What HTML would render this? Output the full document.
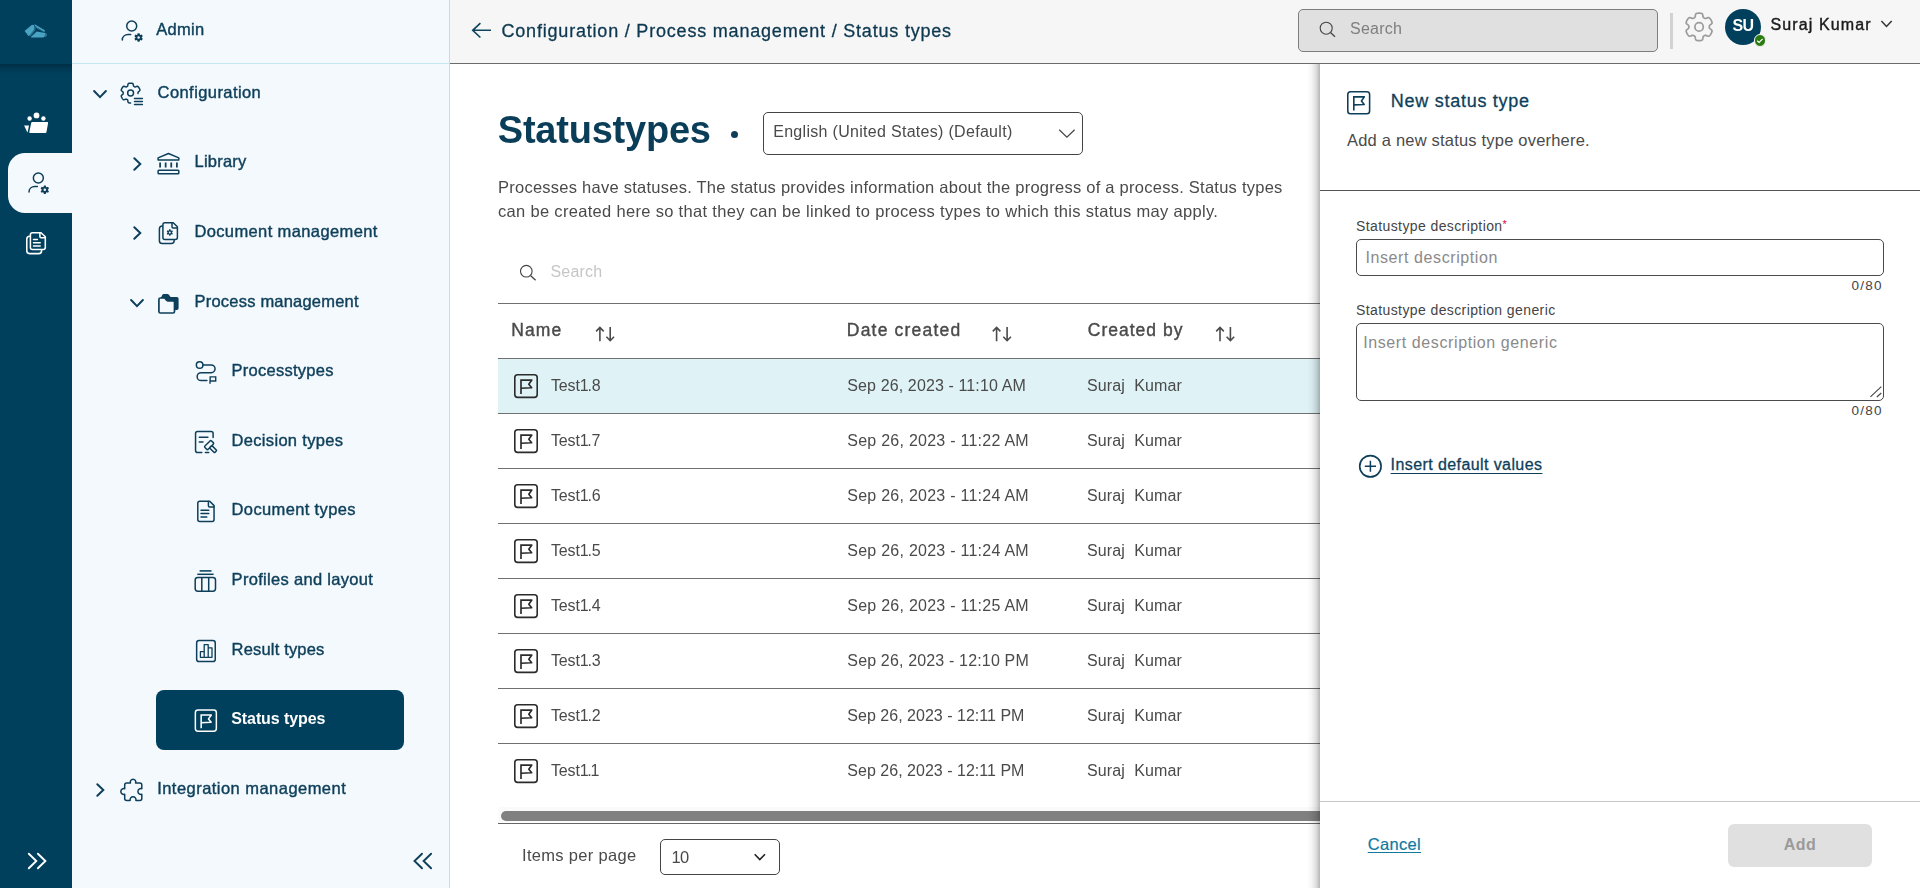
<!DOCTYPE html>
<html lang="en">
<head>
<meta charset="utf-8">
<title>Status types</title>
<style>
*{box-sizing:border-box;margin:0;padding:0}
html,body{width:1920px;height:888px;overflow:hidden;background:#fff;font-family:"Liberation Sans",sans-serif;color:#0e3f5a}
.abs{position:absolute}
svg{display:block;overflow:visible;position:absolute;left:0;top:0}
.t{position:absolute;white-space:nowrap;line-height:20px}
.med{-webkit-text-stroke:.35px currentColor}
.ic{fill:none;stroke:#0e3f5a;stroke-width:1.5;stroke-linecap:round;stroke-linejoin:round}

#rail{position:absolute;left:0;top:0;width:72px;height:888px;background:#00405c}
#railshadow{position:absolute;left:0;top:64px;width:72px;height:10px;background:linear-gradient(rgba(0,30,48,.5),rgba(0,30,48,.18) 55%,rgba(0,30,48,0))}
#railactive{position:absolute;left:8px;top:153px;width:64px;height:60px;background:#f4f9fd;border-radius:17px 0 0 17px}

#side{position:absolute;left:72px;top:0;width:378px;height:888px;background:#f4f9fd;border-right:1px solid #d3d7da}
#sidehead{position:absolute;left:72px;top:63px;width:377px;height:1px;background:#c4e6ee}
.nav{font-size:16.5px;letter-spacing:.5px;color:#0e3f5a;-webkit-text-stroke:.42px #0e3f5a}
#active{position:absolute;left:156px;top:690px;width:248px;height:60px;background:#00405c;border-radius:8px}

#top{position:absolute;left:450px;top:0;width:1470px;height:64px;background:#f6f6f6;border-bottom:1px solid #6c6c6c}
#gsearch{position:absolute;left:1298px;top:9px;width:360px;height:43px;background:#e0e0e0;border:1px solid #7e7e7e;border-radius:5px}

.row{position:absolute;left:498px;width:830px;height:55px;border-top:1px solid #707070}
.row.sel{background:#dff3f7}
.cell{font-size:16px;color:#4a4a4a;letter-spacing:.14px}
.nm{letter-spacing:-.15px}
.th{font-size:17.5px;color:#4a4a4a;letter-spacing:1px;-webkit-text-stroke:.4px #4a4a4a}

#panel{position:absolute;left:1320px;top:64px;width:600px;height:824px;background:#fff}
#pshadow{position:absolute;left:1307px;top:64px;width:13px;height:824px;background:linear-gradient(to right,rgba(0,0,0,0),rgba(0,0,0,.04) 35%,rgba(0,0,0,.13) 70%,rgba(0,0,0,.29))}
.lbl{font-size:14px;color:#444;letter-spacing:.4px}
.ph{font-size:16px;color:#8a8a8a;letter-spacing:.6px}
.cnt{font-size:13.5px;color:#444;letter-spacing:1.25px;right:37.3px}
.inp{position:absolute;left:1356px;width:528px;border:1.3px solid #4a4a4a;border-radius:5px;background:#fff}
</style>
</head>
<body>

<div id="g" style="position:absolute;left:0;top:0;width:1920px;height:888px;will-change:transform">
<!-- ============ RAIL ============ -->
<div id="rail"></div>
<div id="railshadow"></div>
<div id="railactive"></div>
<svg width="72" height="888" viewBox="0 0 72 888">
  <!-- logo -->
  <g fill="#4ba3c3">
    <path d="M24.6,31 L31.7,25.1 Q32.4,24.6 33.2,24.9 L34.3,25.4 L34.2,29.8 L29.3,35.8 Q28.8,36.2 28.3,35.7 Z"/>
    <path d="M34.2,24.1 L44.9,30.2 L44.6,31.9 L36.2,27.2 L34.9,25.4 Z"/>
    <path d="M30.9,36.9 L36.6,31.6 L45.3,33.1 L46.9,34.3 L46.5,35.9 L43,37.5 L31.2,37.5 Z"/>
  </g>
  <path d="M34.3,25.4 L35.6,27.6 L35.3,30.2 L30.4,36.4 L29.3,35.8 L34.2,29.8 Z" fill="#2e7491"/>
  <path d="M45.3,33.1 L46.9,34.3 L46.5,35.9 L44.2,36.9 L44.6,35.2 Z" fill="#2e6f8b"/>
  <path d="M36.2,27.2 L44.6,31.9 L44.4,32.6 L36.9,28.6 Z" fill="#2e7491"/>
  <!-- team/folder -->
  <g fill="#fff">
    <circle cx="36.5" cy="115.4" r="2.9"/><circle cx="29.6" cy="118.5" r="2.2"/><circle cx="43.4" cy="118.5" r="2.2"/>
    <path d="M32.3,122.1 H47.3 Q48.3,122.1 48.1,123.1 L46.5,132 Q46.3,133 45.3,133 H30.2 Q29.1,133 29.3,132 L31.2,123 Q31.4,122.1 32.3,122.1Z"/>
    <path d="M24.1,125.6 H29 L27.7,131.9 Q27.5,132.4 27.2,131.9 Z"/>
  </g>
  <!-- admin (active) -->
  <g class="ic" stroke-width="1.5">
    <circle cx="38.35" cy="178.05" r="5"/>
    <path d="M29,192 C29,188.6 31.6,186.6 34.8,186.6 H37.4"/>
  </g>
  <path d="M45.71,185.50L43.89,185.50L43.51,186.91L42.94,187.24L41.53,186.86L40.62,188.44L41.65,189.47L41.65,190.13L40.62,191.16L41.53,192.74L42.94,192.36L43.51,192.69L43.89,194.10L45.71,194.10L46.09,192.69L46.66,192.36L48.07,192.74L48.98,191.16L47.95,190.13L47.95,189.47L48.98,188.44L48.07,186.86L46.66,187.24L46.09,186.91ZM43.55,189.80 a1.25,1.25 0 1 0 2.50,0 a1.25,1.25 0 1 0 -2.50,0Z" fill="#0e3f5a" fill-rule="evenodd"/>
  <!-- docs -->
  <g fill="none" stroke="#fff" stroke-width="1.55" stroke-linecap="round" stroke-linejoin="round">
    <path d="M32.4,232.7 H41 L45.3,236.8 V247.4 Q45.3,249.4 43.3,249.4 H32.4 Q30.4,249.4 30.4,247.4 V234.7 Q30.4,232.7 32.4,232.7Z"/>
    <path d="M39.9,232.9 V236.6 Q39.9,237.7 41,237.7 H45.1"/>
    <path d="M33.5,239.4H37.4M33.5,242.7H40.2M33.5,245.9H40.2"/>
    <path d="M29.8,236.2 Q26.8,236.2 26.8,239.2 V250.8 Q26.8,253.6 29.6,253.6 H38.8 Q41.5,253.6 41.6,250.6"/>
  </g>
  <!-- expand -->
  <path d="M28.8,853.7 L36.3,861 L28.8,868.3 M37.9,853.7 L45.4,861 L37.9,868.3" fill="none" stroke="#fff" stroke-width="1.9" stroke-linecap="round" stroke-linejoin="miter"/>
</svg>

<!-- ============ SIDEBAR ============ -->
<div id="side"></div>
<div id="sidehead"></div>
<div id="active"></div>
<svg width="450" height="888" viewBox="0 0 450 888">
  <!-- Admin icon -->
  <g class="ic"><circle cx="131.7" cy="26" r="5"/><path d="M122.3,40 C122.3,36.6 124.9,34.55 128.1,34.55 H130.7"/></g>
  <path d="M139.51,33.20L137.69,33.20L137.31,34.61L136.74,34.94L135.33,34.56L134.42,36.14L135.45,37.17L135.45,37.83L134.42,38.86L135.33,40.44L136.74,40.06L137.31,40.39L137.69,41.80L139.51,41.80L139.89,40.39L140.46,40.06L141.87,40.44L142.78,38.86L141.75,37.83L141.75,37.17L142.78,36.14L141.87,34.56L140.46,34.94L139.89,34.61ZM137.35,37.50 a1.25,1.25 0 1 0 2.50,0 a1.25,1.25 0 1 0 -2.50,0Z" fill="#0e3f5a" fill-rule="evenodd"/>

  <!-- chevrons -->
  <g fill="none" stroke="#0e3f5a" stroke-width="2" stroke-linecap="round" stroke-linejoin="miter">
    <path d="M94.1,91 L100,97.1 L105.9,91"/>
    <path d="M134.3,158.2 L140.3,164 L134.3,169.8"/>
    <path d="M134.3,227.2 L140.3,233 L134.3,238.8"/>
    <path d="M131.1,300 L137,306.1 L142.9,300"/>
    <path d="M97.3,784.2 L103.3,790 L97.3,795.8"/>
    <path d="M422,853.7 L414.5,861 L422,868.3 M431.1,853.7 L423.6,861 L431.1,868.3" stroke-width="1.9"/>
  </g>

  <!-- Configuration gear -->
  <g class="ic" stroke-width="1.5">
    <path d="M138.01,93.44L138.00,93.05L138.01,92.66L138.09,92.26L138.40,91.81L139.15,91.23L139.82,90.58L139.94,90.02L139.83,89.51L139.64,89.02L139.42,88.56L139.17,88.10L138.90,87.66L138.61,87.23L138.28,86.83L137.90,86.48L137.35,86.30L136.45,86.55L135.57,86.91L135.03,86.96L134.64,86.82L134.30,86.64L133.97,86.44L133.66,86.17L133.43,85.68L133.30,84.73L133.07,83.83L132.64,83.44L132.15,83.29L131.63,83.21L131.12,83.16L130.60,83.15L130.08,83.16L129.57,83.21L129.05,83.29L128.56,83.44L128.13,83.83L127.90,84.73L127.77,85.68L127.54,86.17L127.23,86.44L126.90,86.64L126.56,86.82L126.17,86.96L125.63,86.91L124.75,86.55L123.85,86.30L123.30,86.48L122.92,86.83L122.59,87.23L122.30,87.66L122.03,88.10L121.78,88.56L121.56,89.02L121.37,89.51L121.26,90.02L121.38,90.58L122.05,91.23L122.80,91.81L123.11,92.26L123.19,92.66L123.20,93.05L123.19,93.44L123.11,93.84L122.80,94.29L122.05,94.87L121.38,95.52L121.26,96.08L121.37,96.59L121.56,97.08L121.78,97.54L122.03,98.00L122.30,98.44L122.59,98.87L122.92,99.27L123.30,99.62L123.85,99.80L124.75,99.55L125.63,99.19L126.17,99.14L126.56,99.28L126.90,99.46L127.23,99.66L127.54,99.93L127.77,100.42L127.90,101.37L128.13,102.27L128.56,102.66L129.05,102.81L129.57,102.89L130.08,102.94L130.60,102.95"/>
    <circle cx="130.6" cy="93.05" r="2.95"/>
  </g>
  <path d="M134.5,98.5H142.4M134.5,101.5H142.4M134.5,104.4H142.4" class="ic" stroke-width="1.45"/>

  <!-- Library -->
  <g class="ic" stroke-width="1.55" stroke-linejoin="miter">
    <path d="M168.45,153.5 L178.8,157.9 V160.1 H158.1 V157.9 Z" stroke-linejoin="round"/>
    <path d="M160.1,162.6V167.4M165.65,162.6V167.4M171.25,162.6V167.4M176.9,162.6V167.4" stroke-width="1.75" stroke-linecap="butt"/>
    <rect x="158.1" y="170.3" width="20.7" height="3.55" rx=".8"/>
  </g>

  <!-- Document management -->
  <g class="ic" stroke-width="1.5">
    <path d="M164.9,222.7 H173.2 L177.4,226.8 V237.4 Q177.4,239.4 175.4,239.4 H164.9 Q162.9,239.4 162.9,237.4 V224.7 Q162.9,222.7 164.9,222.7Z"/>
    <path d="M172,222.9 V226.8 Q172,227.9 173.1,227.9 H177.2"/>
    <path d="M162.4,226 Q159.4,226 159.4,229 V240.8 Q159.4,243.6 162.2,243.6 H171.4 Q174.1,243.6 174.2,240.6"/>
  </g>
  <path d="M170.47,229.37L169.13,229.37L168.86,230.40L168.45,230.64L167.42,230.36L166.76,231.51L167.51,232.26L167.51,232.74L166.76,233.49L167.42,234.64L168.45,234.36L168.86,234.60L169.13,235.63L170.47,235.63L170.74,234.60L171.15,234.36L172.18,234.64L172.84,233.49L172.09,232.74L172.09,232.26L172.84,231.51L172.18,230.36L171.15,230.64L170.74,230.40ZM168.80,232.50 a1.00,1.00 0 1 0 2.00,0 a1.00,1.00 0 1 0 -2.00,0Z" fill="#0e3f5a" fill-rule="evenodd"/>

  <!-- Process management folder -->
  <path d="M160.8,298 L162.1,295.2 Q162.7,294.1 164,294.1 H167.3 Q168.4,294.1 169.1,295 L170.6,297 H176.8 Q178.6,297 178.6,298.8 V308.2 Q178.6,310 176.8,310 H172 V303 H166 L164,298Z" fill="#0e3f5a"/>
  <path d="M160.4,298 H164.2 Q165,298 165.5,298.7 L166.4,300.1 Q166.9,300.8 167.8,300.8 H173 Q174.5,300.8 174.5,302.3 V311.5 Q174.5,313 173,313 H160.4 Q158.9,313 158.9,311.5 V299.5 Q158.9,298 160.4,298Z" fill="#f4f9fd" stroke="#0e3f5a" stroke-width="1.7" stroke-linejoin="round"/>

  <!-- Processtypes -->
  <g class="ic" stroke-width="1.5">
    <circle cx="199.65" cy="365" r="3.3"/>
    <path d="M203,365 H211.2 A3.85,3.85 0 0 1 211.2,372.7 H201.1 A3.95,3.95 0 0 0 201.1,380.6 H206.9"/>
    <path d="M210,383.2 L210.2,376.9 H215.7 V381 H210.2" stroke-width="1.4" stroke-linejoin="miter"/>
  </g>

  <!-- Decision types -->
  <g class="ic" stroke-width="1.5">
    <path d="M213.1,437.4 V433.5 Q213.1,431.5 211.1,431.5 H197.6 Q195.55,431.5 195.55,433.5 V450.4 Q195.55,452.45 197.6,452.45 H201.8 M205.4,452.45 H208.7"/>
    <path d="M199.3,437.2H207.9M199.3,441.9H203"/>
    <g transform="translate(209.1,445.1) rotate(45)">
      <rect x="-2.3" y="-4.7" width="4.6" height="9.4" rx="1.1" fill="#f4f9fd"/>
      <rect x="2.3" y="-1.65" width="7" height="3.3" rx=".8" fill="#f4f9fd"/>
    </g>
  </g>

  <!-- Document types -->
  <g class="ic" stroke-width="1.6">
    <path d="M199.8,501.3 H209.7 L214.05,505.6 V519.6 Q214.05,521.6 212.05,521.6 H199.8 Q197.8,521.6 197.8,519.6 V503.3 Q197.8,501.3 199.8,501.3Z"/>
    <path d="M208.4,501.5 V505.7 Q208.4,506.9 209.6,506.9 H213.9"/>
    <path d="M201,510.25H208.8M201,513.55H208.8M201,516.95H206.8"/>
  </g>

  <!-- Profiles and layout -->
  <g class="ic" stroke-width="1.6">
    <path d="M199.6,570.9H211.5" stroke-width="1.8" stroke="#2a5a73" stroke-linecap="butt"/>
    <path d="M197.3,574.3H213.6" stroke-linecap="butt"/>
    <rect x="195.2" y="577.4" width="20.3" height="13.8" rx="2.6"/>
    <path d="M201.8,577.4V591.2M208.7,577.4V591.2" stroke-linecap="butt"/>
  </g>

  <!-- Result types -->
  <g class="ic" stroke-width="1.7">
    <rect x="196.65" y="640.55" width="18.6" height="21" rx="2.4"/>
    <path d="M200.4,657.3 V651.6 H204.2 M204.2,657.3 V644.7 H208.2 V657.3 M208.2,647.9 H212 V657.3 M200.4,657.3 H212" stroke-width="1.3" stroke-linejoin="round"/>
  </g>

  <!-- Status types (active) -->
  <svg x="194.6" y="709.3" width="22.5" height="22.5" viewBox="0 0 24 24" style="color:#fff;position:static"><rect x=".8" y=".8" width="22.4" height="22.6" rx="2.8" fill="none" stroke="currentColor" stroke-width="1.6"/><path d="M7,5.2V20.1M7,6.05H17.8L14.8,10.25L17.65,13.8L7,14.25" fill="none" stroke="currentColor" stroke-width="1.65" stroke-linejoin="round"/></svg>

  <!-- Integration management -->
  <path class="ic" stroke-width="1.6" d="M126.7,783 H130.5 A2.75,2.75 0 1 1 135.6,783 H139.8 Q141.8,783 141.8,785 V788.7 A2.95,2.95 0 1 0 141.8,794.3 V798.4 Q141.8,800.4 139.8,800.4 H135.9 A2.95,2.95 0 1 0 130.2,800.4 H126.7 Q124.7,800.4 124.7,798.4 V794.3 A2.95,2.95 0 1 1 124.7,788.7 V785 Q124.7,783 126.7,783Z"/>
</svg>

<span class="t nav" style="left:157.6px;top:81.6px;letter-spacing:0.42px">Configuration</span>
<span class="t nav" style="left:194.6px;top:150.5px;letter-spacing:0.2px">Library</span>
<span class="t nav" style="left:194.4px;top:220.5px;letter-spacing:0.38px">Document management</span>
<span class="t nav" style="left:194.6px;top:291.2px;letter-spacing:0.2px">Process management</span>
<span class="t nav" style="left:231.6px;top:359.5px;letter-spacing:0.25px">Processtypes</span>
<span class="t nav" style="left:231.6px;top:430.3px;letter-spacing:0.31px">Decision types</span>
<span class="t nav" style="left:231.6px;top:499.3px;letter-spacing:0.36px">Document types</span>
<span class="t nav" style="left:231.6px;top:568.5px;letter-spacing:0.31px">Profiles and layout</span>
<span class="t nav" style="left:231.6px;top:639.4px;letter-spacing:0.17px">Result types</span>
<span class="t" style="left:231.3px;top:709.3px;font-size:16px;font-weight:700;color:#fff;letter-spacing:-.1px">Status types</span>
<span class="t nav" style="left:157.2px;top:777.6px;letter-spacing:0.46px">Integration management</span>

<!-- ============ HEADER ============ -->
<div id="top"></div>
<div id="gsearch"></div>
<div class="abs" style="left:1670px;top:13px;width:3px;height:36px;background:#d2d2d2"></div>
<div class="abs" style="left:1725px;top:9px;width:36px;height:36px;border-radius:50%;background:#00405c"></div>
<div class="abs" style="left:1753.5px;top:34.3px;width:12.6px;height:12.6px;border-radius:50%;background:#2b7a12;border:1.2px solid #f6f6f6"></div>
<svg width="1920" height="64" viewBox="0 0 1920 64">
  <path d="M472.7,30.3 H491 M480.4,23.1 L472.7,30.3 L480.4,37.5" fill="none" stroke="#0e4460" stroke-width="1.6" stroke-linejoin="miter"/>
  <g fill="none" stroke="#444" stroke-width="1.1"><circle cx="1326.2" cy="28.2" r="6"/><path d="M1330.5,32.6 L1335,36.8" stroke-width="1.3"/></g>
  <g fill="none" stroke="#9c9c9c" stroke-width="1.7" stroke-linejoin="round"><path d="M1709.30,26.90L1709.32,26.36L1709.43,25.81L1709.87,25.19L1710.95,24.38L1711.89,23.47L1712.07,22.69L1711.91,21.98L1711.66,21.31L1711.35,20.66L1711.01,20.02L1710.63,19.41L1710.22,18.82L1709.77,18.26L1709.23,17.77L1708.46,17.54L1707.20,17.90L1705.96,18.42L1705.21,18.50L1704.67,18.32L1704.20,18.07L1703.75,17.78L1703.33,17.41L1703.01,16.72L1702.84,15.38L1702.53,14.11L1701.94,13.56L1701.25,13.34L1700.54,13.23L1699.82,13.17L1699.10,13.15L1698.38,13.17L1697.66,13.23L1696.95,13.34L1696.26,13.56L1695.67,14.11L1695.36,15.38L1695.19,16.72L1694.87,17.41L1694.45,17.78L1694.00,18.07L1693.53,18.32L1692.99,18.50L1692.24,18.42L1691.00,17.90L1689.74,17.54L1688.97,17.77L1688.43,18.26L1687.98,18.82L1687.57,19.41L1687.19,20.02L1686.85,20.66L1686.54,21.31L1686.29,21.98L1686.13,22.69L1686.31,23.47L1687.25,24.38L1688.33,25.19L1688.77,25.81L1688.88,26.36L1688.90,26.90L1688.88,27.44L1688.77,27.99L1688.33,28.61L1687.25,29.42L1686.31,30.33L1686.13,31.11L1686.29,31.82L1686.54,32.49L1686.85,33.14L1687.19,33.77L1687.57,34.39L1687.98,34.98L1688.43,35.54L1688.97,36.03L1689.74,36.26L1691.00,35.90L1692.24,35.38L1692.99,35.30L1693.53,35.48L1694.00,35.73L1694.45,36.02L1694.87,36.39L1695.19,37.08L1695.36,38.42L1695.67,39.69L1696.26,40.24L1696.95,40.46L1697.66,40.57L1698.38,40.63L1699.10,40.65L1699.82,40.63L1700.54,40.57L1701.25,40.46L1701.94,40.24L1702.53,39.69L1702.84,38.42L1703.01,37.08L1703.33,36.39L1703.75,36.02L1704.20,35.73L1704.67,35.48L1705.21,35.30L1705.96,35.38L1707.20,35.90L1708.46,36.26L1709.23,36.03L1709.77,35.54L1710.22,34.98L1710.63,34.39L1711.01,33.78L1711.35,33.14L1711.66,32.49L1711.91,31.82L1712.07,31.11L1711.89,30.33L1710.95,29.42L1709.87,28.61L1709.43,27.99L1709.32,27.44Z"/><circle cx="1699.1" cy="26.9" r="4.2"/></g>
  <path d="M1757.2,40.7 L1759.1,42.5 L1762.6,38.9" fill="none" stroke="#fff" stroke-width="1.2"/>
  <path d="M1881.4,21 L1886.5,26.4 L1891.7,21" fill="none" stroke="#333" stroke-width="1.5"/>
</svg>
<span class="t" style="left:501.5px;top:21.3px;font-size:18px;letter-spacing:.8px;color:#0d3850;-webkit-text-stroke:.3px #0d3850">Configuration / Process management / Status types</span>
<span class="t" style="left:1350px;top:18.8px;font-size:16px;letter-spacing:.25px;color:#7e7e7e">Search</span>
<span class="t" style="left:1725px;width:36px;text-align:center;top:16.3px;font-size:16px;font-weight:700;letter-spacing:-.5px;color:#fff">SU</span>
<span class="t" style="left:1770.5px;top:15.3px;font-size:16px;letter-spacing:1.12px;color:#1a1a1a;-webkit-text-stroke:.4px #1a1a1a">Suraj Kumar</span>

<!-- ============ MAIN ============ -->
<span class="t" style="left:497.8px;top:108.2px;font-size:38px;line-height:44px;font-weight:700;letter-spacing:-.22px;color:#0a3d58">Statustypes</span>
<div class="abs" style="left:731px;top:130.5px;width:7px;height:7px;border-radius:50%;background:#0e3f5a"></div>
<div class="abs" style="left:763px;top:112px;width:320px;height:42.5px;border:1px solid #444;border-radius:5px;background:#fff"></div>
<span class="t" style="left:773.2px;top:121.7px;font-size:16px;letter-spacing:.3px;color:#4a4a4a">English (United States) (Default)</span>
<div class="t" style="left:498px;top:175.1px;font-size:16.5px;line-height:24px;letter-spacing:.25px;color:#4a4a4a">Processes have statuses. The status provides information about the progress of a process. Status types<br><span style="letter-spacing:.315px">can be created here so that they can be linked to process types to which this status may apply.</span></div>
<span class="t" style="left:550.5px;top:261.5px;font-size:16px;letter-spacing:.17px;color:#c6c6c6">Search</span>

<!-- table -->
<div class="row" style="top:303px;height:55px"></div>
<span class="t th" style="left:511.2px;top:320.3px;letter-spacing:1.1px">Name</span>
<span class="t th" style="left:846.8px;top:320.3px;letter-spacing:1.2px">Date created</span>
<span class="t th" style="left:1087.8px;top:320.3px">Created by</span>
<div class="row sel" style="top:358px">
  <svg class="abs" style="left:16px;top:14.6px;color:#2b2b2b" width="24" height="24" viewBox="0 0 24 24"><rect x=".8" y=".8" width="22.4" height="22.6" rx="2.8" fill="none" stroke="currentColor" stroke-width="1.6"/><path d="M7,5.2V20.1M7,6.05H17.8L14.8,10.25L17.65,13.8L7,14.25" fill="none" stroke="currentColor" stroke-width="1.65" stroke-linejoin="round"/></svg>
  <span class="t cell nm" style="left:53px;top:17px">Test<span style="letter-spacing:-1.2px">1</span>.8</span>
  <span class="t cell" style="left:349.3px;top:17px;letter-spacing:0.12px">Sep 26, 2023 - 11:10 AM</span>
  <span class="t cell" style="left:589px;top:17px">Suraj&nbsp; Kumar</span>
</div>
<div class="row" style="top:413px">
  <svg class="abs" style="left:16px;top:14.6px;color:#2b2b2b" width="24" height="24" viewBox="0 0 24 24"><rect x=".8" y=".8" width="22.4" height="22.6" rx="2.8" fill="none" stroke="currentColor" stroke-width="1.6"/><path d="M7,5.2V20.1M7,6.05H17.8L14.8,10.25L17.65,13.8L7,14.25" fill="none" stroke="currentColor" stroke-width="1.65" stroke-linejoin="round"/></svg>
  <span class="t cell nm" style="left:53px;top:17px">Test<span style="letter-spacing:-1.4px">1</span>.7</span>
  <span class="t cell" style="left:349.3px;top:17px;letter-spacing:0.25px">Sep 26, 2023 - 11:22 AM</span>
  <span class="t cell" style="left:589px;top:17px">Suraj&nbsp; Kumar</span>
</div>
<div class="row" style="top:468px">
  <svg class="abs" style="left:16px;top:14.6px;color:#2b2b2b" width="24" height="24" viewBox="0 0 24 24"><rect x=".8" y=".8" width="22.4" height="22.6" rx="2.8" fill="none" stroke="currentColor" stroke-width="1.6"/><path d="M7,5.2V20.1M7,6.05H17.8L14.8,10.25L17.65,13.8L7,14.25" fill="none" stroke="currentColor" stroke-width="1.65" stroke-linejoin="round"/></svg>
  <span class="t cell nm" style="left:53px;top:17px">Test<span style="letter-spacing:-1.2px">1</span>.6</span>
  <span class="t cell" style="left:349.3px;top:17px;letter-spacing:0.25px">Sep 26, 2023 - 11:24 AM</span>
  <span class="t cell" style="left:589px;top:17px">Suraj&nbsp; Kumar</span>
</div>
<div class="row" style="top:523px">
  <svg class="abs" style="left:16px;top:14.6px;color:#2b2b2b" width="24" height="24" viewBox="0 0 24 24"><rect x=".8" y=".8" width="22.4" height="22.6" rx="2.8" fill="none" stroke="currentColor" stroke-width="1.6"/><path d="M7,5.2V20.1M7,6.05H17.8L14.8,10.25L17.65,13.8L7,14.25" fill="none" stroke="currentColor" stroke-width="1.65" stroke-linejoin="round"/></svg>
  <span class="t cell nm" style="left:53px;top:17px">Test<span style="letter-spacing:-1.2px">1</span>.5</span>
  <span class="t cell" style="left:349.3px;top:17px;letter-spacing:0.25px">Sep 26, 2023 - 11:24 AM</span>
  <span class="t cell" style="left:589px;top:17px">Suraj&nbsp; Kumar</span>
</div>
<div class="row" style="top:578px">
  <svg class="abs" style="left:16px;top:14.6px;color:#2b2b2b" width="24" height="24" viewBox="0 0 24 24"><rect x=".8" y=".8" width="22.4" height="22.6" rx="2.8" fill="none" stroke="currentColor" stroke-width="1.6"/><path d="M7,5.2V20.1M7,6.05H17.8L14.8,10.25L17.65,13.8L7,14.25" fill="none" stroke="currentColor" stroke-width="1.65" stroke-linejoin="round"/></svg>
  <span class="t cell nm" style="left:53px;top:17px">Test<span style="letter-spacing:-1.2px">1</span>.4</span>
  <span class="t cell" style="left:349.3px;top:17px;letter-spacing:0.25px">Sep 26, 2023 - 11:25 AM</span>
  <span class="t cell" style="left:589px;top:17px">Suraj&nbsp; Kumar</span>
</div>
<div class="row" style="top:633px">
  <svg class="abs" style="left:16px;top:14.6px;color:#2b2b2b" width="24" height="24" viewBox="0 0 24 24"><rect x=".8" y=".8" width="22.4" height="22.6" rx="2.8" fill="none" stroke="currentColor" stroke-width="1.6"/><path d="M7,5.2V20.1M7,6.05H17.8L14.8,10.25L17.65,13.8L7,14.25" fill="none" stroke="currentColor" stroke-width="1.65" stroke-linejoin="round"/></svg>
  <span class="t cell nm" style="left:53px;top:17px">Test<span style="letter-spacing:-1.2px">1</span>.3</span>
  <span class="t cell" style="left:349.3px;top:17px;letter-spacing:0.16px">Sep 26, 2023 - 12:10 PM</span>
  <span class="t cell" style="left:589px;top:17px">Suraj&nbsp; Kumar</span>
</div>
<div class="row" style="top:688px">
  <svg class="abs" style="left:16px;top:14.6px;color:#2b2b2b" width="24" height="24" viewBox="0 0 24 24"><rect x=".8" y=".8" width="22.4" height="22.6" rx="2.8" fill="none" stroke="currentColor" stroke-width="1.6"/><path d="M7,5.2V20.1M7,6.05H17.8L14.8,10.25L17.65,13.8L7,14.25" fill="none" stroke="currentColor" stroke-width="1.65" stroke-linejoin="round"/></svg>
  <span class="t cell nm" style="left:53px;top:17px">Test<span style="letter-spacing:-1.2px">1</span>.2</span>
  <span class="t cell" style="left:349.3px;top:17px;letter-spacing:0.02px">Sep 26, 2023 - 12:11 PM</span>
  <span class="t cell" style="left:589px;top:17px">Suraj&nbsp; Kumar</span>
</div>
<div class="row" style="top:743px">
  <svg class="abs" style="left:16px;top:14.6px;color:#2b2b2b" width="24" height="24" viewBox="0 0 24 24"><rect x=".8" y=".8" width="22.4" height="22.6" rx="2.8" fill="none" stroke="currentColor" stroke-width="1.6"/><path d="M7,5.2V20.1M7,6.05H17.8L14.8,10.25L17.65,13.8L7,14.25" fill="none" stroke="currentColor" stroke-width="1.65" stroke-linejoin="round"/></svg>
  <span class="t cell nm" style="left:53px;top:17px">Test<span style="letter-spacing:-1.3px">1.</span>1</span>
  <span class="t cell" style="left:349.3px;top:17px;letter-spacing:0.02px">Sep 26, 2023 - 12:11 PM</span>
  <span class="t cell" style="left:589px;top:17px">Suraj&nbsp; Kumar</span>
</div>
<div class="abs" style="left:498px;top:798px;width:830px;height:1px;background:transparent"></div>
<div class="abs" style="left:498px;top:807px;width:830px;height:15px;background:#fafafa"></div>
<div class="abs" style="left:501px;top:811px;width:840px;height:9.5px;border-radius:5px;background:#808080"></div>
<div class="abs" style="left:498px;top:823px;width:830px;height:1px;background:#666"></div>
<span class="t" style="left:522px;top:844.5px;font-size:16.5px;letter-spacing:.32px;color:#4a4a4a">Items per page</span>
<div class="abs" style="left:660px;top:839px;width:120px;height:36px;border:1px solid #444;border-radius:5px;background:#fff"></div>
<span class="t" style="left:671.5px;top:847.3px;font-size:16.5px;letter-spacing:-.8px;color:#4a4a4a">10</span>

<svg width="1340" height="888" viewBox="0 0 1340 888">
  <path d="M1059.2,129.7 L1066.9,137.2 L1074.6,129.7" fill="none" stroke="#444" stroke-width="1.2"/>
  <g fill="none" stroke="#444" stroke-width="1.1"><circle cx="526.3" cy="271.2" r="5.8"/><path d="M530.5,275.5 L535.6,280.2" stroke-width="1.3"/></g>
  <g fill="none" stroke="#4a4a4a" stroke-width="1.6" stroke-linejoin="miter">
    <path d="M599.9,341.3 V327.6 M596.1,331.4 L599.9,327.5 L603.7,331.4 M610.2,326.9 V340.6 M606.4,336.8 L610.2,340.7 L614,336.8"/>
    <path d="M996.6,341.3 V327.6 M992.8,331.4 L996.6,327.5 L1000.4,331.4 M1007.1,326.9 V340.6 M1003.3,336.8 L1007.1,340.7 L1010.9,336.8"/>
    <path d="M1220,341.3 V327.6 M1216.2,331.4 L1220,327.5 L1223.8,331.4 M1230.4,326.9 V340.6 M1226.6,336.8 L1230.4,340.7 L1234.2,336.8"/>
  </g>
  <path d="M754.7,854.2 L759.8,859.5 L765,854.2" fill="none" stroke="#222" stroke-width="1.6"/>
</svg>

</div>
<span class="t nav" style="left:156.3px;top:19.1px;letter-spacing:0.3px">Admin</span>
<!-- ============ PANEL ============ -->
<div id="pshadow"></div>
<div id="panel"></div>
<svg class="abs" style="left:1346.8px;top:90.7px;color:#0e3f5a" width="23.4" height="23.4" viewBox="0 0 24 24"><rect x=".8" y=".8" width="22.4" height="22.6" rx="2.8" fill="none" stroke="currentColor" stroke-width="1.6"/><path d="M7,5.2V20.1M7,6.05H17.8L14.8,10.25L17.65,13.8L7,14.25" fill="none" stroke="currentColor" stroke-width="1.65" stroke-linejoin="round"/></svg>
<span class="t" style="left:1390.8px;top:90.5px;font-size:18px;letter-spacing:.73px;color:#0e3f5a;-webkit-text-stroke:.3px #0e3f5a">New status type</span>
<span class="t" style="left:1347px;top:130.3px;font-size:16.5px;letter-spacing:.2px;color:#4a4a4a">Add a new status type overhere.</span>
<div class="abs" style="left:1320px;top:190px;width:600px;height:1px;background:#555"></div>

<span class="t lbl" style="left:1356px;top:216.35px">Statustype description</span>
<span class="t" style="left:1502.5px;top:213.5px;font-size:11px;color:#e0003c">*</span>
<div class="inp" style="top:239px;height:37px"></div>
<span class="t ph" style="left:1365.4px;top:247.5px">Insert description</span>
<span class="t cnt" style="top:275.9px">0/80</span>

<span class="t lbl" style="left:1356px;top:300.35px">Statustype description generic</span>
<div class="inp" style="top:323px;height:78px"></div>
<span class="t ph" style="left:1363.2px;top:332.6px">Insert description generic</span>
<span class="t cnt" style="top:400.9px">0/80</span>

<svg width="1920" height="888" viewBox="0 0 1920 888" style="pointer-events:none">
  <path d="M1870.4,396.8 L1881.3,386.7 M1876.8,397 L1881.3,393" fill="none" stroke="#444" stroke-width="1.1"/>
  <g fill="none" stroke="#0e3f5a" stroke-width="1.65"><circle cx="1370.4" cy="466.25" r="10.7"/><path d="M1364.8,466.25H1376M1370.4,460.65V471.85" stroke-width="1.5"/></g>
</svg>
<span class="t" style="left:1390.6px;top:455.2px;font-size:16px;letter-spacing:.41px;color:#0e3f5a;-webkit-text-stroke:.3px #0e3f5a;text-decoration:underline;text-decoration-thickness:1.1px;text-underline-offset:2.7px">Insert default values</span>

<div class="abs" style="left:1320px;top:801px;width:600px;height:1px;background:#c6c6c6"></div>
<span class="t" style="left:1367.7px;top:834px;font-size:16.5px;letter-spacing:.32px;color:#0f7a9d;-webkit-text-stroke:.2px #0f7a9d;text-decoration:underline;text-decoration-thickness:1.2px;text-underline-offset:2px">Cancel</span>
<div class="abs" style="left:1728px;top:824px;width:144px;height:43px;border-radius:6px;background:#e0e0e0"></div>
<span class="t" style="left:1728px;width:144px;text-align:center;top:835.1px;font-size:16px;font-weight:700;letter-spacing:.5px;color:#9a9a9a">Add</span>

</body>
</html>
